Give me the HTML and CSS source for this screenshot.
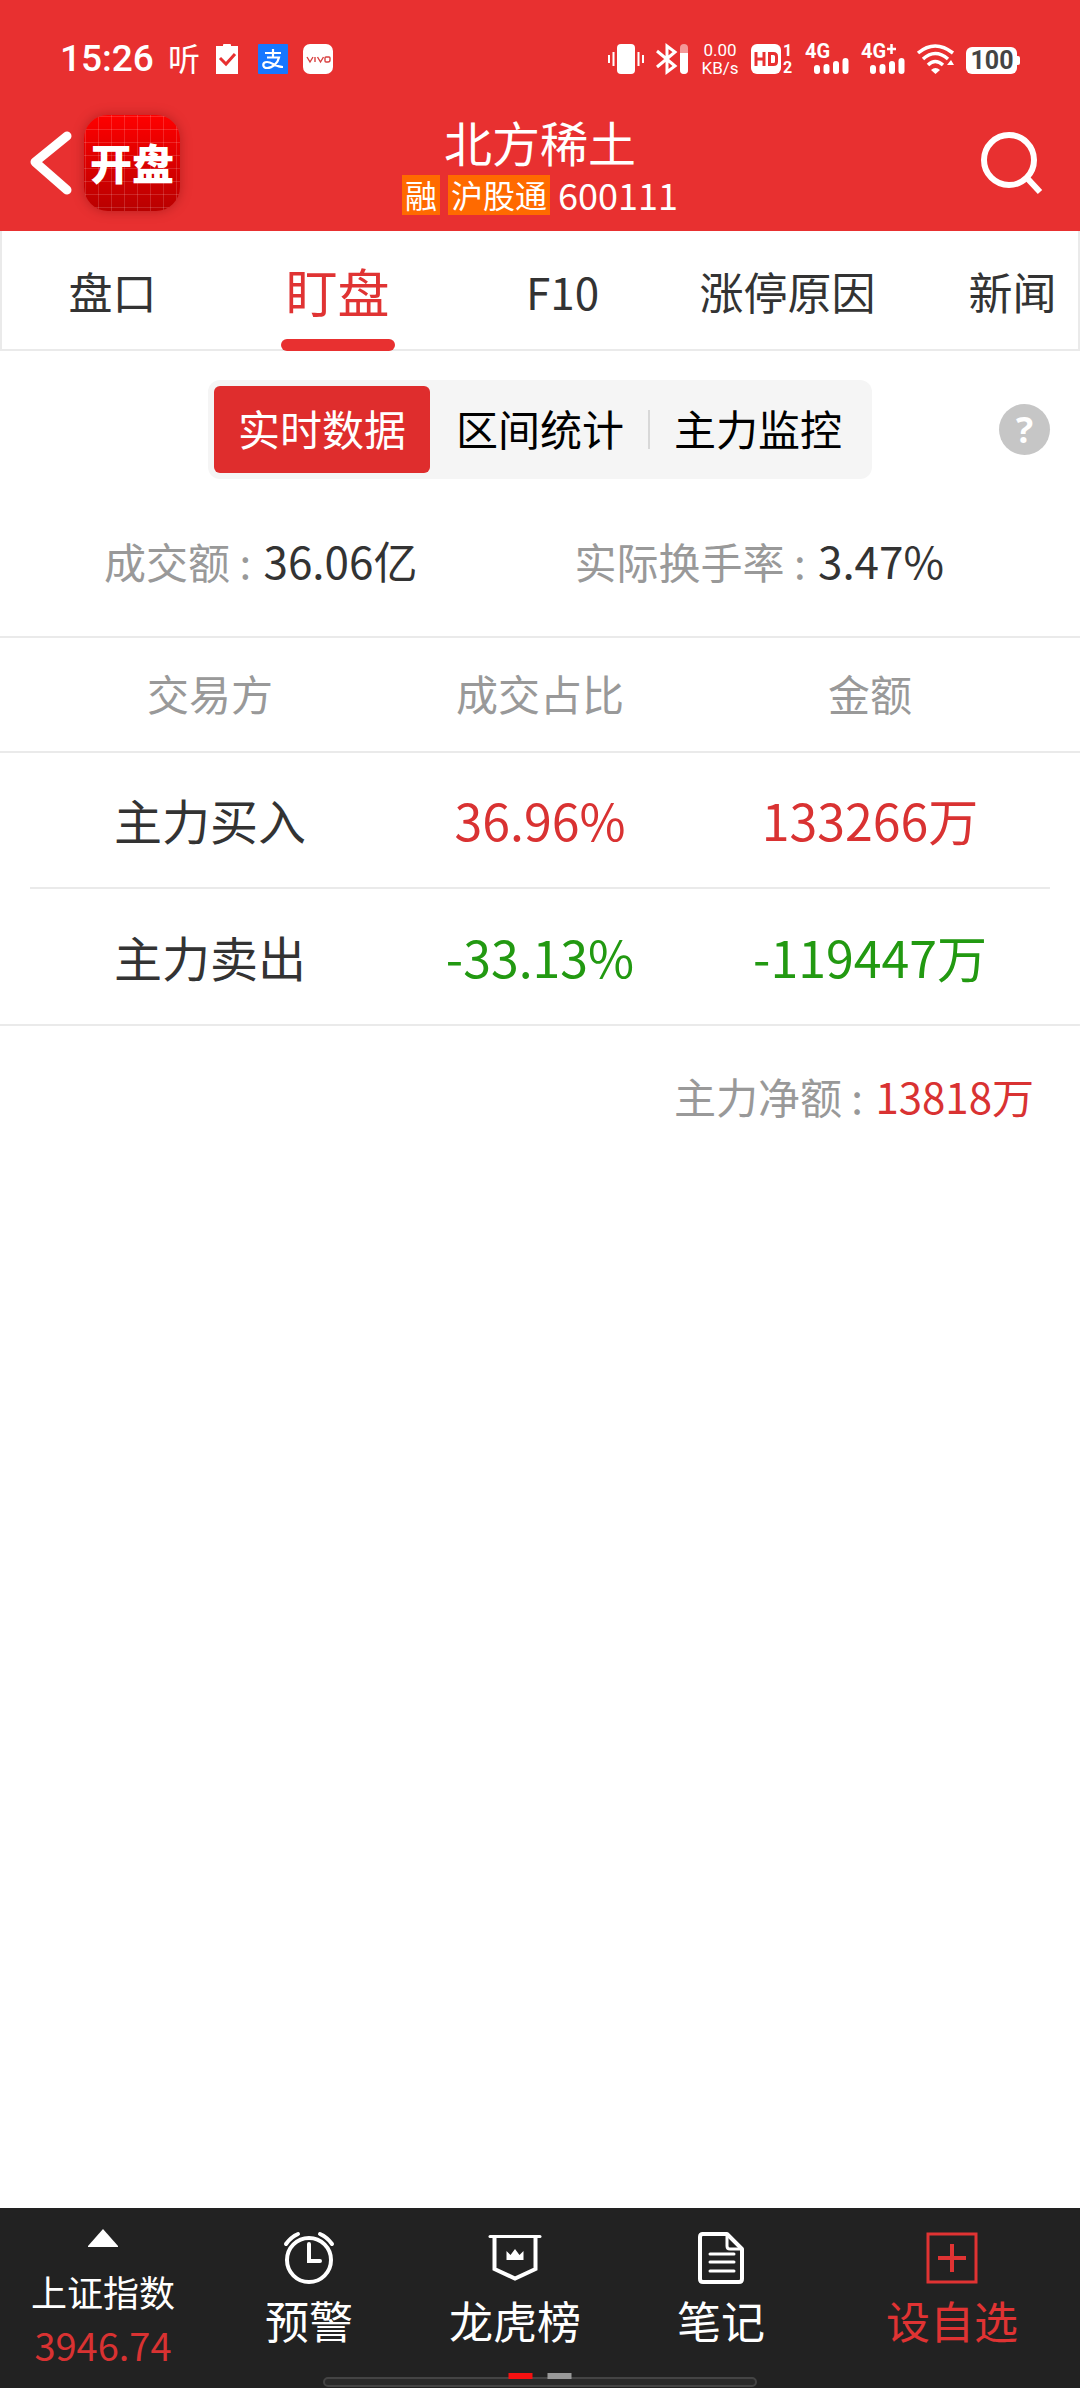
FILE: index.html
```html
<!DOCTYPE html>
<html lang="zh-CN">

<head>
  <meta charset="UTF-8">
  <meta name="viewport" content="width=device-width, initial-scale=1">
  <title>北方稀土 600111</title>
  <link rel="stylesheet" href="styles.css">
</head>

<body>

  <header class="top">
    <div class="status">
      <div class="status-left">
        <span class="clock">15:26</span>
        <span class="listen">听</span>
        <svg class="ico-clip" width="22" height="30" viewBox="0 0 22 30">
          <path d="M0 2h7V1q0-1 1-1h6q1 0 1 1v1h7v28H0z" fill="#fff" />
          <path d="M4 14l6 6L19 10" fill="none" stroke="#e83030" stroke-width="3" />
        </svg>
        <svg class="ico-pay" width="30" height="30" viewBox="0 0 30 30">
          <rect width="30" height="30" rx="1" fill="#1677ff" />
          <path d="M7 9h16M15 5v8M9 13.500h12c-1 5-6 10.500-12 10.500-5 0-5-6 0-6 5 0 9 5 16 5" fill="none" stroke="#fff" stroke-width="2.200" />
        </svg>
        <svg width="30" height="30" viewBox="0 0 30 30">
          <rect width="30" height="30" rx="7" fill="#fff" />
          <path d="M4 13l3 5 3-5M12 13v5M14.500 13l3 5 3-5M23 13h3q1 0 1 1v2q0 2-2 2h-2q-1 0-1-1v-3q0-1 1-1z" fill="none" stroke="#d84040" stroke-width="1.400" />
        </svg>
      </div>
      <div class="status-right">
        <svg width="36" height="30" viewBox="0 0 36 30">
          <rect x="9" width="18" height="30" rx="4" fill="#fff" />
          <path d="M1 11v8M5.500 8v14M30.500 8v14M35 11v8" stroke="#fff" stroke-width="2" />
        </svg>
        <svg width="33" height="30" viewBox="0 0 33 30">
          <path d="M1 7l18 15-8 6V2l8 6L1 23" fill="none" stroke="#fff" stroke-width="3" />
          <rect x="24" width="8" height="30" rx="4" fill="#fff" opacity=".5" />
          <path d="M24 9h8v17q0 4-4 4t-4-4z" fill="#fff" />
        </svg>
        <span class="net">0.00<br>KB/s</span>
        <svg width="42" height="30" viewBox="0 0 42 30">
          <rect width="30" height="30" rx="6" fill="#fff" />
          <path d="M5 8v14M13 8v14M5 15h8M18.500 9.500h4q3 0 3 3v5q0 3-3 3h-4z" fill="none" stroke="#e83030" stroke-width="3" />
          <text x="32" y="12" class="t-sim">1</text>
          <text x="32" y="29" class="t-sim">2</text>
        </svg>
        <svg width="44" height="30" viewBox="0 0 44 30">
          <text x="0" y="14" class="t-4g">4G</text>
          <path d="M12 24v3M21.500 23v4M31 20v7M40.500 17v10" stroke="#fff" stroke-width="6" stroke-linecap="round" />
        </svg>
        <svg width="44" height="30" viewBox="0 0 44 30">
          <text x="0" y="14" class="t-4g">4G</text>
          <path d="M26 5h9M30.500 0v10" stroke="#fff" stroke-width="2.500" />
          <path d="M12 24v3M21.500 23v4M31 20v7M40.500 17v10" stroke="#fff" stroke-width="6" stroke-linecap="round" />
        </svg>
        <svg width="37" height="30" viewBox="0 0 37 30">
          <path d="M1 9q17-14 35 0M6 15q12-11 25 0M11 21q7-7 15 0" fill="none" stroke="#fff" stroke-width="3.500" />
          <path d="M14 26q4.500-4 9 0l-4.500 4z" fill="#fff" />
          <path d="M34 16l3 5h-7z" fill="#fff" />
        </svg>
        <svg width="54" height="30" viewBox="0 0 54 30">
          <rect y="3" width="51" height="27" rx="6" fill="#fff" />
          <path d="M51 12h1q2 0 2 2v5q0 2-2 2h-1z" fill="#fff" />
          <text x="26" y="25" class="t-bat">100</text>
        </svg>
      </div>
    </div>

    <div class="bar">
      <div class="bar-left">
        <button class="back" aria-label="返回">
          <svg width="42" height="64" viewBox="0 0 42 64">
            <path d="M37 5L5 31l32 28" fill="none" stroke="#fff" stroke-width="9" stroke-linecap="round" stroke-linejoin="round" />
          </svg>
        </button>
        <div class="app-logo">开盘</div>
      </div>
      <div class="stock">
        <h1>北方稀土</h1>
        <div class="stock-info">
          <span class="tag">融</span>
          <span class="tag">沪股通</span>
          <span>600111</span>
        </div>
      </div>
      <button class="search" aria-label="搜索">
        <svg width="62" height="64" viewBox="0 0 62 64">
          <circle cx="29" cy="29" r="25" fill="none" stroke="#fff" stroke-width="6" />
          <path d="M47 47l13 14" stroke="#fff" stroke-width="6" />
        </svg>
      </button>
    </div>
  </header>

  <nav class="tabs">
    <a href="#">盘口</a>
    <a href="#" class="active">盯盘</a>
    <a href="#">F10</a>
    <a href="#">涨停原因</a>
    <a href="#">新闻</a>
  </nav>

  <main>
    <div class="modes">
      <div class="segment">
        <button class="active">实时数据</button>
        <button>区间统计</button>
        <button class="divided">主力监控</button>
      </div>
      <button class="help" aria-label="帮助">?</button>
    </div>

    <div class="summary">
      <div><span class="label">成交额 : </span><span class="value">36.06亿</span></div>
      <div><span class="label">实际换手率 : </span><span class="value">3.47%</span></div>
    </div>

    <table class="trades">
      <thead>
        <tr>
          <th>交易方</th>
          <th>成交占比</th>
          <th>金额</th>
        </tr>
      </thead>
      <tbody>
        <tr>
          <td>主力买入</td>
          <td class="num up">36.96%</td>
          <td class="num up">133266万</td>
        </tr>
        <tr>
          <td>主力卖出</td>
          <td class="num down">-33.13%</td>
          <td class="num down">-119447万</td>
        </tr>
      </tbody>
    </table>

    <div class="net-total"><span class="label">主力净额 : </span><span class="up">13818万</span></div>
  </main>

  <footer class="toolbar">
    <button class="index">
      <svg width="30" height="18" viewBox="0 0 30 18">
        <path d="M15 0l15 17v1H0v-1z" fill="#fff" />
      </svg>
      <span>上证指数</span>
      <span class="index-value">3946.74</span>
    </button>
    <button>
      <svg width="52" height="52" viewBox="0 0 52 52" fill="none" stroke="#fff" stroke-width="4" stroke-linecap="round">
        <circle cx="26" cy="28" r="22" />
        <path d="M26 12v17h11" />
        <path d="M3 12q5-7 12-10M37 2q7 3 12 10" />
      </svg>
      <span>预警</span>
    </button>
    <button>
      <svg width="52" height="52" viewBox="0 0 52 52">
        <path d="M1 4.500h50" stroke="#fff" stroke-width="3" stroke-linecap="round" />
        <path d="M5.500 5v32l20.500 9.500L46.500 37V5" fill="none" stroke="#fff" stroke-width="4" />
        <path d="M17.500 28V19l4 4 4.500-6 4.500 6 4-4v9z" fill="#fff" />
      </svg>
      <span>龙虎榜</span>
    </button>
    <button>
      <svg width="52" height="52" viewBox="0 0 52 52" fill="none" stroke="#fff" stroke-linejoin="round" stroke-linecap="round">
        <path d="M7 2h25l15 15v30q0 3-3 3H8q-3 0-3-3V5q0-3 3-3" stroke-width="4" />
        <path d="M32 3v11q0 3 3 3h11M15 22h24M15 30h24M15 39h24" stroke-width="3" />
      </svg>
      <span>笔记</span>
    </button>
    <button class="add">
      <svg width="52" height="52" viewBox="0 0 52 52" fill="none" stroke="#e03333">
        <path d="M2 2h48v48H2z" stroke-width="3" />
        <path d="M12 26h28M26 12v28" stroke-width="4" />
      </svg>
      <span>设自选</span>
    </button>
    <div class="home-handle"></div>
    <div class="pager"><i class="on"></i><i></i></div>
  </footer>

</body>

</html>
```
FILE: styles.css
```css
:root {
  --red: #e83030;
  --up: #d93232;
  --down: #229911;
  --line: #eaeaea;
  --grey: #999;
}

* {
  box-sizing: border-box;
}

body {
  margin: 0;
  min-height: 100vh;
  display: flex;
  flex-direction: column;
  background: #fff;
  color: #333;
  font-family: "Noto Sans CJK SC", sans-serif;
  font-size: 42px;
  line-height: 60px;
}

button {
  padding: 0;
  border: 0;
  background: none;
  color: inherit;
  font: inherit;
}

svg {
  display: block;
  overflow: visible;
}

/* header */

.top {
  background: var(--red);
  color: #fff;
}

.status {
  display: flex;
  justify-content: space-between;
  padding: 40px 60px 17px;
}

.status-left,
.status-right {
  display: flex;
  align-items: center;
  height: 38px;
}

.status-right {
  gap: 12px;
}

.clock {
  font: 500 37px/38px Roboto, sans-serif;
}

.listen {
  margin: 0 16px 0 14px;
  font-size: 32px;
  line-height: 34px;
  height: 38px;
}

.ico-pay {
  margin: 0 15px 0 20px;
}

.net {
  width: 38px;
  font: 17px/18px Roboto, sans-serif;
  text-align: center;
}

.t-sim,
.t-4g,
.t-bat {
  fill: #fff;
  font-family: Roboto, sans-serif;
  font-weight: 700;
  font-size: 16px;
}

.t-4g {
  font-size: 20px;
}

.t-bat {
  fill: #444;
  font-size: 25px;
  text-anchor: middle;
}

.bar {
  display: grid;
  grid-template-columns: 1fr auto 1fr;
  align-items: start;
  height: 136px;
  padding: 20px 30px 0;
}

.bar-left {
  display: flex;
  align-items: center;
  gap: 12px;
}

.app-logo {
  width: 96px;
  height: 96px;
  border-radius: 24px;
  background:
    linear-gradient(90deg, rgba(255, 255, 255, .15) 1px, transparent 1px) 1px 0 / 13px 13px,
    linear-gradient(rgba(255, 255, 255, .15) 1px, transparent 1px) 0 1px / 13px 13px,
    linear-gradient(#f00, #b80000);
  box-shadow: 0 0 12px rgba(90, 0, 0, .35);
  font-size: 42px;
  font-weight: 900;
  line-height: 94px;
  text-align: center;
}

.stock {
  display: flex;
  flex-direction: column;
  align-items: center;
  gap: 8px;
}

.stock h1 {
  margin: 0;
  font-size: 48px;
  font-weight: 400;
  line-height: 52px;
}

.stock-info {
  display: flex;
  gap: 8px;
  font-size: 36px;
  line-height: 38px;
}

.tag {
  height: 40px;
  padding: 0 3px;
  background: #ff6a00;
  font-size: 32px;
}

.search {
  justify-self: end;
  margin: 16px 8px 0 0;
}

/* tabs */

.tabs {
  display: flex;
  height: 120px;
  overflow: hidden;
  box-shadow: inset 2px 0 var(--line), inset -2px 0 var(--line), inset 0 -2px var(--line);
}

.tabs a {
  position: relative;
  flex: 0 0 calc(100% / 4.8);
  color: #333;
  font-size: 44px;
  line-height: 120px;
  text-align: center;
  text-decoration: none;
}

.tabs .active {
  color: #e03333;
  font-size: 52px;
}

.tabs .active::after {
  content: "";
  position: absolute;
  bottom: 0;
  left: 50%;
  width: 114px;
  height: 12px;
  margin-left: -57px;
  border-radius: 6px;
  background: var(--red);
}

/* content */

.modes {
  display: grid;
  grid-template-columns: 1fr auto 1fr;
  align-items: center;
  padding: 29px 30px 0;
}

.segment {
  grid-column: 2;
  display: flex;
  gap: 2px;
  padding: 6px;
  border-radius: 12px;
  background: #f5f5f5;
  color: #000;
}

.segment button {
  position: relative;
  width: 216px;
  height: 87px;
  padding-bottom: 4px;
  border-radius: 6px;
}

.segment .active {
  background: #df2d2d;
  color: #fff;
}

.segment .divided::before {
  content: "";
  position: absolute;
  top: 24px;
  left: -2px;
  width: 2px;
  height: 39px;
  background: #d8d8d8;
}

.help {
  justify-self: end;
  width: 51px;
  height: 51px;
  border-radius: 50%;
  background: #c6c6c6;
  color: #fff;
  font: 700 36px/51px "Open Sans", sans-serif;
}

.summary {
  display: flex;
  justify-content: space-between;
  padding: 52px 136px 45px 104px;
  border-bottom: 2px solid var(--line);
}

.summary .value {
  font-size: 44px;
  line-height: 1;
}

.label {
  margin-right: 3px;
  color: var(--grey);
  white-space: pre;
}

.trades {
  width: 100%;
  border-collapse: collapse;
  table-layout: fixed;
  text-align: center;
}

.trades th {
  height: 114px;
  padding: 0 0 4px;
  border-bottom: 2px solid var(--line);
  color: var(--grey);
  font-weight: 400;
}

.trades td {
  height: 137px;
  padding: 0 0 4px;
  font-size: 48px;
}

.trades .num {
  font-size: 50px;
}

.trades th:first-child,
.trades td:first-child {
  width: 34.72%;
  padding-left: 45px;
}

.trades th:last-child,
.trades td:last-child {
  width: 34.72%;
  padding-right: 45px;
}

/* the line between rows stops short of both edges */
.trades tbody tr {
  background: linear-gradient(var(--line), var(--line)) center bottom / calc(100% - 60px) 2px no-repeat;
}

.trades tbody tr:last-child {
  background-size: 100% 2px;
}

.up {
  color: var(--up);
}

.down {
  color: var(--down);
}

.net-total {
  padding: 40px 46px 40px 0;
  text-align: right;
}

/* bottom bar */

.toolbar {
  position: relative;
  display: grid;
  grid-template-columns: 206fr 206fr 206fr 206fr 256fr;
  height: 180px;
  margin-top: auto;
  background: #222;
  color: #fff;
}

.toolbar button {
  display: flex;
  flex-direction: column;
  align-items: center;
  gap: 6px;
  padding-top: 24px;
  font-size: 44px;
  line-height: 60px;
}

.toolbar .index {
  gap: 16px;
  padding-top: 21px;
  font-size: 36px;
}

.toolbar .index span {
  line-height: 56px;
}

.toolbar .index .index-value {
  margin-top: -18px;
  color: var(--up);
  font-size: 38px;
}

.toolbar .add {
  color: #e03333;
}

.home-handle {
  position: absolute;
  bottom: 1px;
  left: 50%;
  width: 434px;
  height: 10px;
  margin-left: -217px;
  border: 2px solid #444;
  border-radius: 5px;
  background: #2a2a2a;
}

.pager {
  position: absolute;
  bottom: 9px;
  left: 50%;
  display: flex;
  gap: 15px;
  transform: translateX(-50%);
}

.pager i {
  width: 24px;
  height: 6px;
  background: #999;
}

.pager .on {
  background: #f51111;
}
```
